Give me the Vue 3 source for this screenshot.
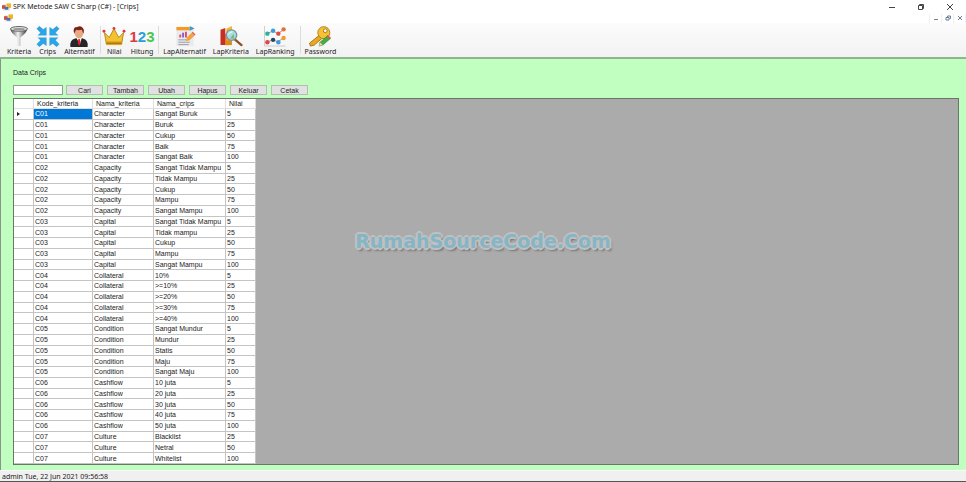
<script setup>
import { ref } from "vue";

const search = ref("");
const selected = ref(0);

const groups = [
  ["Kriteria", "Crips", "Alternatif"],
  ["Nilai", "Hitung"],
  ["LapAlternatif", "LapKriteria", "LapRanking"],
  ["Password"],
];

const actions = ["Cari", "Tambah", "Ubah", "Hapus", "Keluar", "Cetak"];

const columns = ["Kode_kriteria", "Nama_kriteria", "Nama_crips", "Nilai"];

const scale = [5, 25, 50, 75, 100];

const kriteria = [
  { kode: "C01", nama: "Character", crips: ["Sangat Buruk", "Buruk", "Cukup", "Baik", "Sangat Baik"] },
  { kode: "C02", nama: "Capacity", crips: ["Sangat Tidak Mampu", "Tidak Mampu", "Cukup", "Mampu", "Sangat Mampu"] },
  { kode: "C03", nama: "Capital", crips: ["Sangat Tidak Mampu", "Tidak mampu", "Cukup", "Mampu", "Sangat Mampu"] },
  { kode: "C04", nama: "Collateral", crips: ["10%", ">=10%", ">=20%", ">=30%", ">=40%"] },
  { kode: "C05", nama: "Condition", crips: ["Sangat Mundur", "Mundur", "Statis", "Maju", "Sangat Maju"] },
  { kode: "C06", nama: "Cashflow", crips: ["10 juta", "20 juta", "30 juta", "40 juta", "50 juta"] },
  { kode: "C07", nama: "Culture", crips: ["Blacklist", "Netral", "Whitelist"], nilai: [25, 50, 100] },
];

const rows = kriteria.flatMap((k) =>
  k.crips.map((c, i) => [k.kode, k.nama, c, (k.nilai || scale)[i]])
);
</script>

<template>
  <div class="window">
    <header class="titlebar">
      <svg class="app_icon" viewBox="0 0 10 8">
        <rect x="1" y="1" width="8" height="7" fill="#e4e4e8" />
        <rect x="0" y="2" width="4" height="4" fill="#c8503c" />
        <rect x="5" y="0" width="5" height="5" fill="#f0b429" />
        <rect x="3" y="4" width="4" height="3" fill="#3f6fc4" />
      </svg>
      <h1>SPK Metode SAW C Sharp (C#) - [Crips]</h1>
      <div class="win_buttons">
        <button aria-label="Minimize">
          <svg viewBox="0 0 8 8"><path d="M1 4.5h6" /></svg>
        </button>
        <button aria-label="Restore">
          <svg viewBox="0 0 8 8"><path d="M1.500 2.500h4v4h-4zM2.500 2.500v-1h4v4h-1" /></svg>
        </button>
        <button aria-label="Close">
          <svg viewBox="0 0 8 8"><path d="M1 1l6 6M7 1l-6 6" /></svg>
        </button>
      </div>
    </header>

    <div class="menubar">
      <svg class="app_icon" viewBox="0 0 10 8">
        <rect x="1" y="1" width="8" height="7" fill="#e4e4e8" />
        <rect x="0" y="2" width="4" height="4" fill="#c8503c" />
        <rect x="5" y="0" width="5" height="5" fill="#f0b429" />
        <rect x="3" y="4" width="4" height="3" fill="#3f6fc4" />
      </svg>
      <div class="mdi_buttons">
        <button aria-label="Minimize form">
          <svg viewBox="0 0 6 6"><path d="M1 4.5h4" /></svg>
        </button>
        <button aria-label="Restore form">
          <svg viewBox="0 0 6 6"><path d="M1 2.500h3v2.500h-3zM2.500 2v-1h3v2.500h-1" /></svg>
        </button>
        <button aria-label="Close form">
          <svg viewBox="0 0 6 6"><path d="M1 1l4 4M5 1l-4 4" /></svg>
        </button>
      </div>
    </div>

    <nav class="toolbar">
      <div v-for="(group, g) in groups" :key="g" class="group">
        <button v-for="name in group" :key="name" class="tool">
          <svg v-if="name === 'Kriteria'" viewBox="0 0 24 22">
            <defs>
              <linearGradient id="steel">
                <stop offset="0" stop-color="#444" />
                <stop offset=".45" stop-color="#f4f4f4" />
                <stop offset="1" stop-color="#333" />
              </linearGradient>
            </defs>
            <path d="M3 3q0 4 7 9v9h3.500v-9q7-5 7-9z" fill="url(#steel)" />
            <ellipse cx="12" cy="3" rx="9" ry="2.500" fill="#ddd" stroke="#666" />
            <ellipse cx="12" cy="3.300" rx="6" ry="1.200" fill="#999" />
          </svg>
          <svg v-else-if="name === 'Crips'" viewBox="0 0 24 22">
            <g fill="#2fa4e3">
              <path d="M0 3L3 0 7 3.500 10.500 1V10H1L4 7z" />
              <path d="M24 3L21 0 17 3.500 13.500 1V10H23L20 7z" />
              <path d="M0 19L3 22 7 18.500 10.500 21V12H1L4 15z" />
              <path d="M24 19L21 22 17 18.500 13.500 21V12H23L20 15z" />
            </g>
          </svg>
          <svg v-else-if="name === 'Alternatif'" viewBox="0 0 24 22">
            <path d="M3 22q-1-8 5-9l4-1 4 1q6 1 5 9z" fill="#25262a" />
            <path d="M9 12h6l-2 7z" fill="#fff" />
            <path d="M11.300 13.500h1.500l1 4-1.500 3.500-1.500-3z" fill="#d22" />
            <ellipse cx="12" cy="7.500" rx="4.500" ry="5.500" fill="#e9a982" />
            <path d="M7 8Q5 1 10 1q4-2 6 1 2 2 .5 6l-1.500-4q-4 1-6 0z" fill="#7a2418" />
          </svg>
          <svg v-else-if="name === 'Nilai'" viewBox="0 0 24 22">
            <path d="M2 7l5 5 5-9 5 9 5-5-2 12H4z" fill="#f2c230" stroke="#b8861a" />
            <path d="M4 16h16v4H4z" fill="#e5a51c" />
            <path d="M4 18h16" stroke="#8c6514" />
            <g fill="#e03535">
              <circle cx="1.500" cy="5.500" r="1.500" />
              <circle cx="12" cy="2.500" r="1.500" />
              <circle cx="22.500" cy="5.500" r="1.500" />
            </g>
          </svg>
          <span v-else-if="name === 'Hitung'" class="digits" aria-hidden="true">
            <b class="one">1</b><b class="two">2</b><b class="three">3</b>
          </span>
          <svg v-else-if="name === 'LapAlternatif'" viewBox="0 0 24 22">
            <path d="M3 1h18v20H3z" fill="#e9e9ef" />
            <path d="M3 1h14v3.500H3z" fill="#f39a24" />
            <path d="M17 0l5 2.500-5 2.500z" fill="#3c9bd6" />
            <path d="M7 12V9" stroke="#d65a5a" stroke-width="2" />
            <path d="M10 12V7" stroke="#7a62c9" stroke-width="2" />
            <path d="M13 12V6" stroke="#e04b6a" stroke-width="2" />
            <path d="M5 14.500h9M5 17h12M5 19.500h11" stroke="#9a9aa5" />
            <path d="M13 16l1-4 5-5 3 3-5 5z" fill="#f3a33a" />
            <path d="M19 7l3 3 1-1-3-3z" fill="#e2564b" />
          </svg>
          <svg v-else-if="name === 'LapKriteria'" viewBox="0 0 24 22">
            <path d="M1 4l5-2v18H1z" fill="#c72f22" />
            <path d="M6 8h4v12H6z" fill="#e2452f" />
            <path d="M7 3l6-3v16H7z" fill="#f4b62b" />
            <path d="M6 15h7v5H6z" fill="#e08a1c" />
            <path d="M16 14l7 6" stroke="#8b5428" stroke-width="2.500" stroke-linecap="round" />
            <circle cx="12.500" cy="9.500" r="5.500" fill="#a8dce0" stroke="#7f9297" stroke-width="1.400" />
            <path d="M9.500 9q1-3 4-3" stroke="#fff" fill="none" />
            <path d="M11 13l4-5v5z" fill="#70b875" />
          </svg>
          <svg v-else-if="name === 'LapRanking'" viewBox="0 0 24 22">
            <path d="M1 0v21h22" fill="none" stroke="#ccc" />
            <path d="M4 8l6-3 5 3 6-4M4 17l6-3 5 3 6-5" fill="none" stroke="#778" stroke-width=".8" />
            <circle cx="4" cy="8" r="2.300" fill="#22b39a" />
            <circle cx="10" cy="5" r="2.300" fill="#3d9be0" />
            <circle cx="15.500" cy="8" r="2.300" fill="#e5483f" />
            <circle cx="21" cy="3.500" r="2.300" fill="#e86f33" />
            <circle cx="4" cy="17" r="2.300" fill="#e5483f" />
            <circle cx="10" cy="14.500" r="2.300" fill="#22465e" />
            <circle cx="15.500" cy="17" r="2.300" fill="#3d9be0" />
            <circle cx="21" cy="12.500" r="2.300" fill="#f09a34" />
          </svg>
          <svg v-else viewBox="0 0 24 22">
            <path d="M11 10l3 3-8 7-4 1-1-3z" fill="#e9a820" stroke="#a87412" />
            <circle cx="16" cy="7" r="6.300" fill="#f5c234" stroke="#b27f18" />
            <circle cx="17.500" cy="5" r="2" fill="#fff" stroke="#a87412" />
            <path d="M11 21l1-4 8-7 3 3-8 7z" fill="#46ad45" stroke="#2d7a35" stroke-width=".6" />
            <path d="M11 21l1-4 3 3z" fill="#efd4a0" />
            <path d="M19 11l3 3 1.500-1.500-3-3z" fill="#e0574e" />
          </svg>
          <span>{{ name }}</span>
        </button>
      </div>
    </nav>

    <main class="form">
      <label for="cari">Data Crips</label>
      <div class="actions">
        <input id="cari" v-model="search" type="text" />
        <button v-for="action in actions" :key="action">{{ action }}</button>
      </div>
      <div class="grid">
        <table>
          <colgroup>
            <col class="col_head" />
            <col class="col_kode" />
            <col class="col_nama" />
            <col class="col_crips" />
            <col class="col_nilai" />
          </colgroup>
          <thead>
            <tr>
              <th></th>
              <th v-for="column in columns" :key="column">{{ column }}</th>
            </tr>
          </thead>
          <tbody>
            <tr v-for="(row, r) in rows" :key="r" @click="selected = r">
              <td class="marker"><i v-if="r === selected"></i></td>
              <td v-for="(cell, c) in row" :key="c" :class="{ selected: r === selected && c === 0 }">{{ cell }}</td>
            </tr>
          </tbody>
        </table>
      </div>
    </main>

    <footer class="statusbar">admin Tue, 22 Jun 2021 09:56:58</footer>

    <div class="watermark">RumahSourceCode.Com</div>
  </div>
</template>

<style>
body {
  margin: 0;
}
</style>

<style scoped>
.window {
  position: relative;
  display: flex;
  flex-direction: column;
  box-sizing: border-box;
  height: 100vh;
  background: #fff;
  border-bottom: 1px solid #555;
  font-family: "Noto Sans", "Open Sans", sans-serif;
  font-size: 7px;
  line-height: 10px;
  color: #222;
}

button,
input {
  box-sizing: border-box;
  margin: 0;
  padding: 0;
  border: 0;
  background: none;
  font: inherit;
  color: inherit;
}

.titlebar {
  display: flex;
  align-items: center;
  height: 13px;
  padding-left: 2px;
}

.app_icon {
  width: 9px;
  height: 8px;
}

h1 {
  margin: 0 auto 0 2px;
  font-size: 7px;
  font-weight: normal;
}

.win_buttons {
  display: flex;
  gap: 21px;
  padding-right: 12px;
}

.win_buttons button,
.win_buttons svg {
  display: block;
  width: 8px;
  height: 8px;
}

.win_buttons path,
.mdi_buttons path {
  fill: none;
  stroke: #444;
  stroke-width: 1;
}

.menubar {
  display: flex;
  align-items: center;
  justify-content: space-between;
  height: 10px;
  padding-left: 4px;
}

.mdi_buttons {
  display: flex;
  gap: 1px;
  background: #f0f0f0;
  padding: 0 1px;
}

.mdi_buttons button {
  display: flex;
  align-items: center;
  justify-content: center;
  width: 11px;
  height: 9px;
  background: #fff;
}

.mdi_buttons svg {
  width: 6px;
  height: 6px;
}

.mdi_buttons path {
  stroke: #6a8098;
}

.toolbar {
  display: flex;
  height: 34px;
  padding-left: 4px;
  background: linear-gradient(#fcfcfc, #f2f2f2);
  border-bottom: 2px solid #8fb58f;
}

.group {
  display: flex;
}

.group + .group::before {
  content: "";
  width: 1px;
  margin: 3px 1px 3px 2px;
  background: #dcdcdc;
}

.tool {
  display: flex;
  flex-direction: column;
  align-items: center;
  min-width: 25px;
  padding: 3px 3px 0;
}

.tool + .tool {
  margin-left: 1px;
}

.tool svg,
.digits {
  flex: none;
  width: 24px;
  height: 21px;
  margin: 0 -3px;
}

.digits {
  display: flex;
  justify-content: center;
  align-items: center;
  font-family: "Liberation Sans", Arial, sans-serif;
  font-size: 15px;
}

.one {
  color: #e0393e;
}

.two {
  color: #2a9fd8;
}

.three {
  color: #4cc552;
}

.form {
  flex: 1;
  display: flex;
  flex-direction: column;
  min-height: 0;
  padding: 9px 7px 5px 12px;
  background: #c0ffc0;
  border-left: 1px solid #8a948a;
  font-family: "Liberation Sans", Arial, sans-serif;
}

.actions {
  display: flex;
  gap: 4px;
  margin: 7px 0 3px;
}

.actions input {
  width: 50px;
  height: 10px;
  margin-right: -1px;
  background: #fff;
  border: 1px solid #8f9f8f;
}

.actions button {
  width: 37px;
  height: 10px;
  line-height: 10px;
  background: #e1e1e1;
  border: 1px solid #b4bcb4;
}

.grid {
  flex: 1;
  min-height: 0;
  background: #ababab;
  border: 1px solid #6a766a;
}

table {
  width: 242px;
  height: 100%;
  table-layout: fixed;
  border-collapse: separate;
  border-spacing: 0;
  background: #fff;
}

.col_head {
  width: 20px;
}

.col_kode {
  width: 59px;
}

.col_nama {
  width: 61px;
}

.col_crips {
  width: 72px;
}

.col_nilai {
  width: 30px;
}

th,
td {
  padding: 0 0 0 1px;
  border-right: 1px solid #c4c4c4;
  border-bottom: 1px solid #c4c4c4;
  line-height: 9px;
  font-weight: normal;
  text-align: left;
  white-space: nowrap;
}

th {
  padding-left: 3px;
  border-color: #e0e0e0;
}

.selected {
  background: #0078d7;
  color: #fff;
}

.marker i {
  display: block;
  width: 0;
  margin-left: 2px;
  border: 2px solid transparent;
  border-left: 3px solid #222;
  border-right: 0;
}

.statusbar {
  height: 9px;
  padding: 1px 2px 0;
  background: #f0f0f0;
  border-top: 1px solid #fafafa;
}

.watermark {
  position: absolute;
  top: 50%;
  left: 50%;
  transform: translate(-50%, -50%);
  font-family: "DejaVu Sans", sans-serif;
  font-size: 19px;
  font-weight: bold;
  line-height: 24px;
  color: #86b5c5;
  text-shadow:
    2px 0 #c0c0c0,
    -2px 0 #c0c0c0,
    0 2px #c0c0c0,
    0 -2px #c0c0c0,
    1px 1px #c0c0c0,
    -1px 1px #c0c0c0,
    1px -1px #c0c0c0,
    -1px -1px #c0c0c0,
    2px 3px 2px #777;
  pointer-events: none;
}
</style>
